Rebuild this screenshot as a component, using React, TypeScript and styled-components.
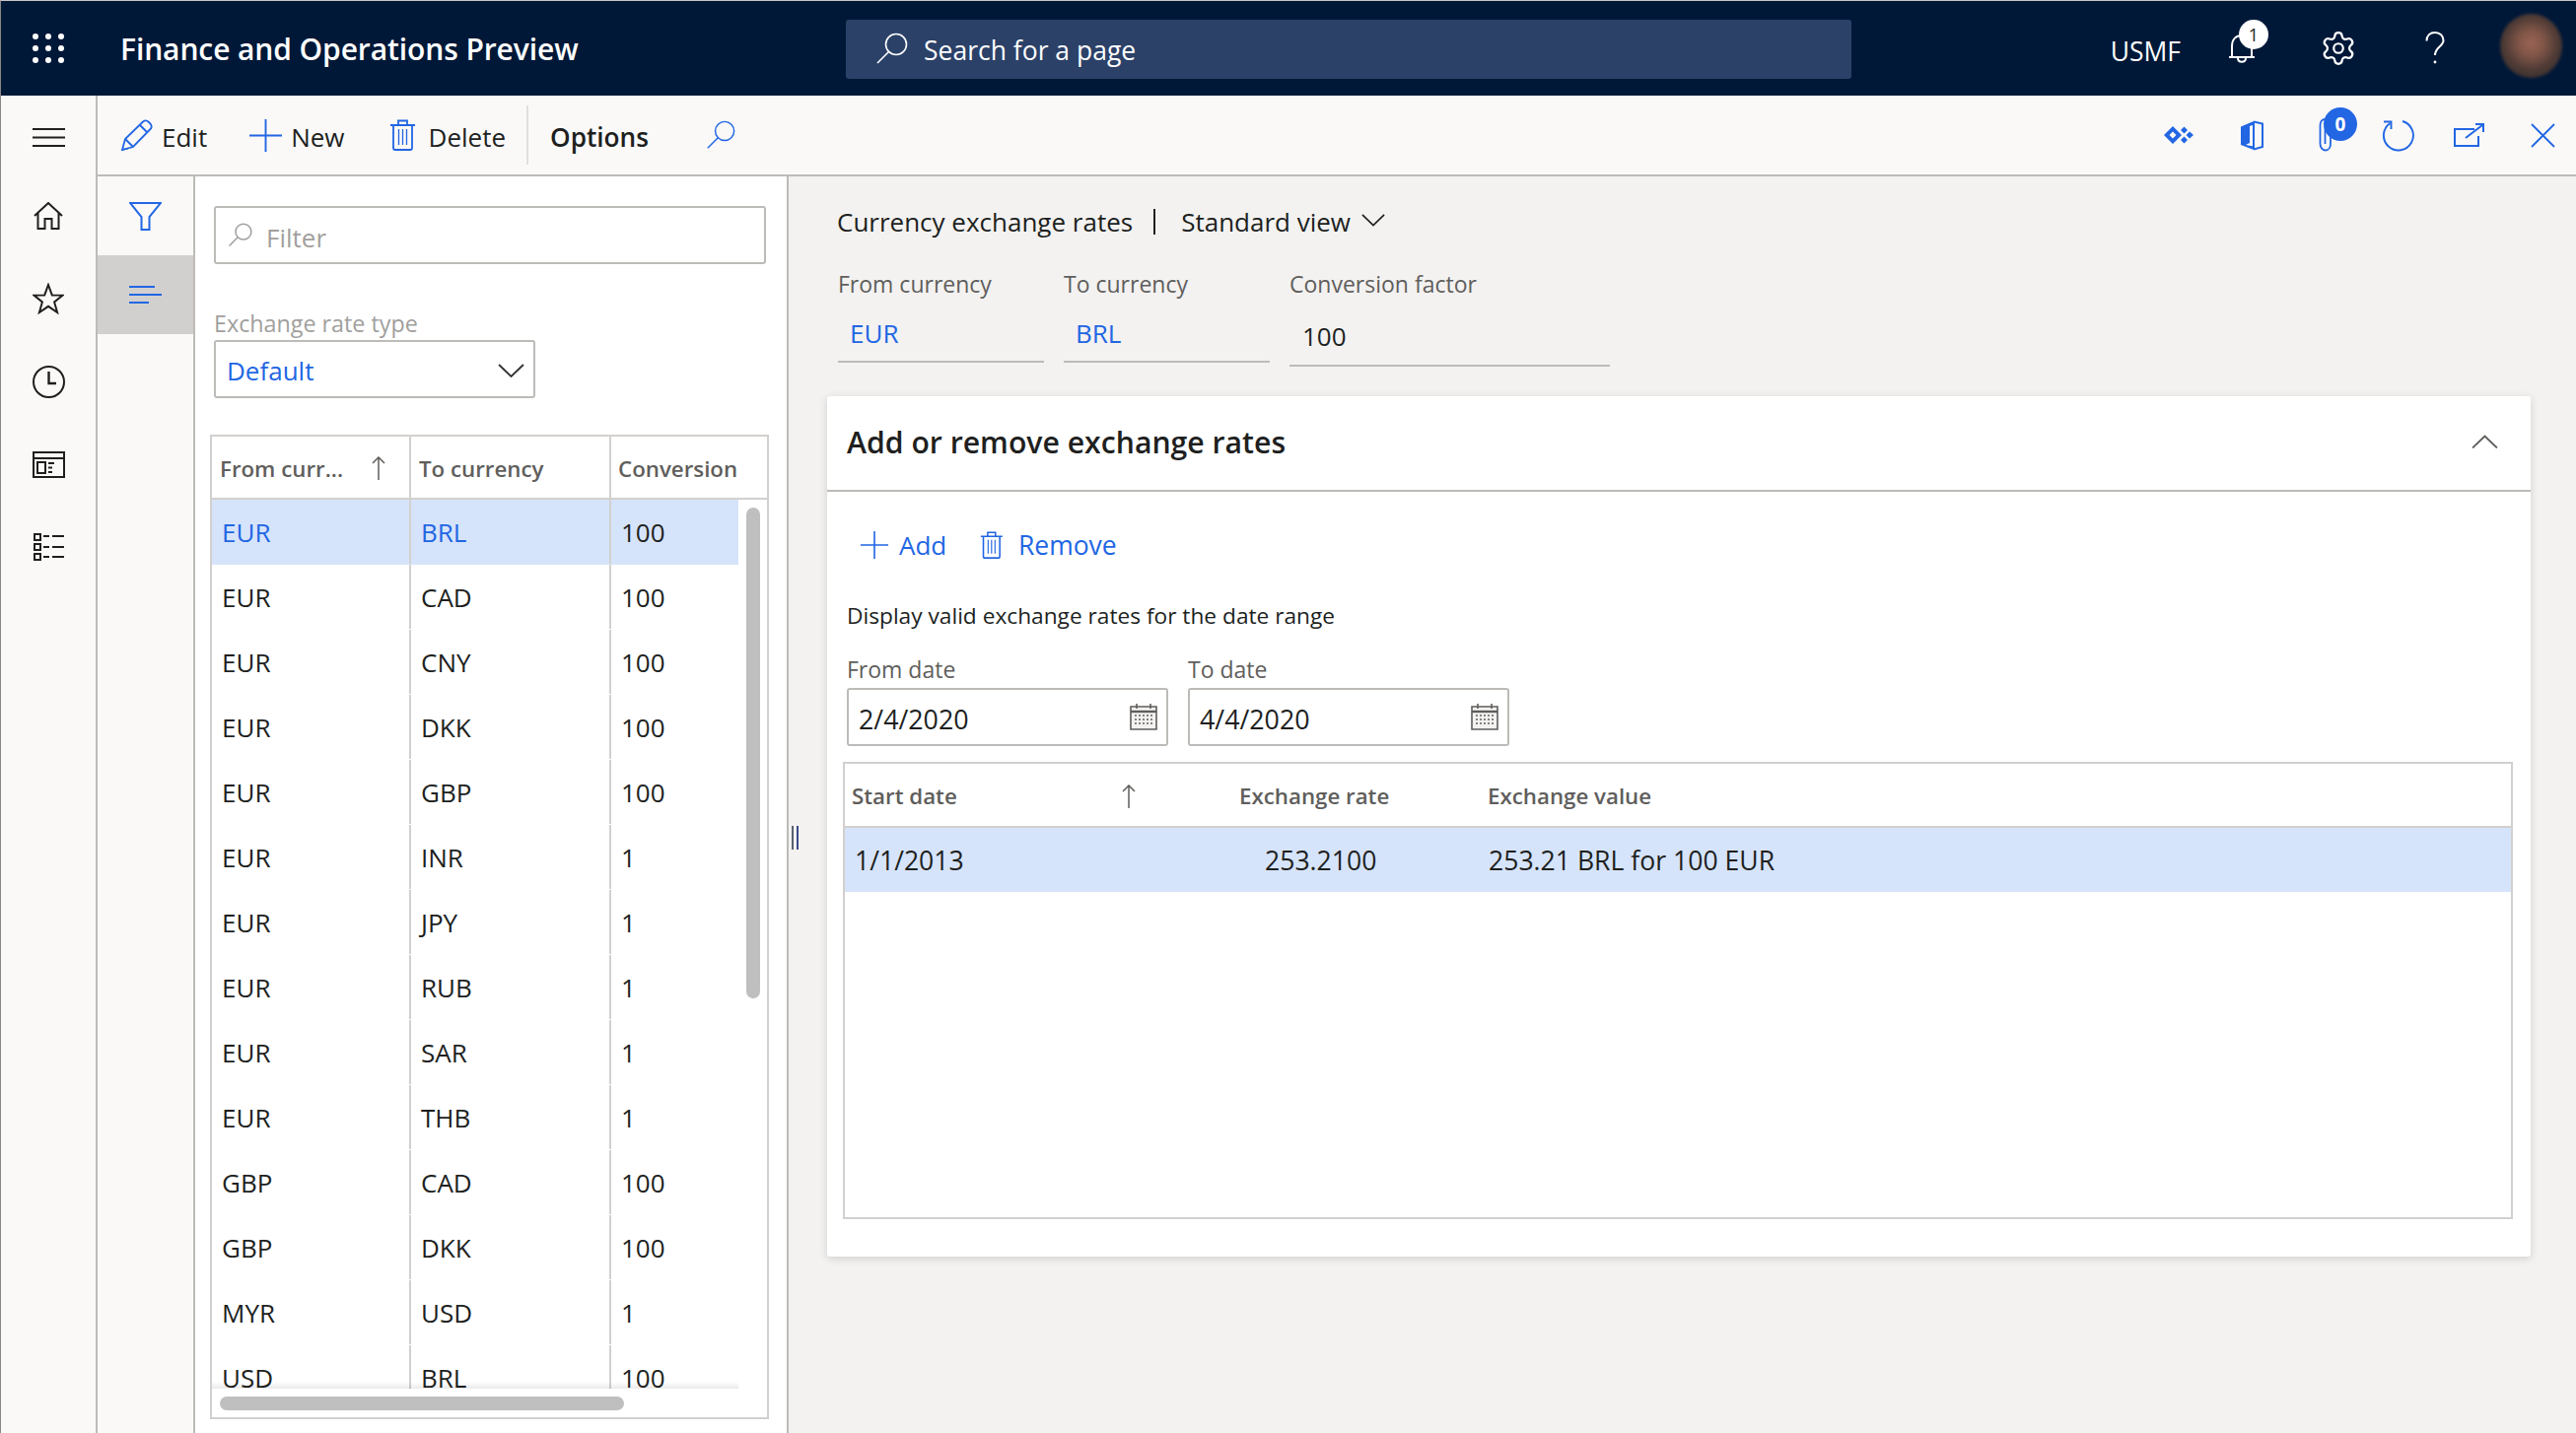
import React from 'react';
import styled, { createGlobalStyle } from 'styled-components';
import { Settings } from 'lucide-react';

const BLUE = '#2266e3';
const INK = '#201f1e';
const LINE = '#bdbbb8';
const GRID_LINE = '#d2d0ce';

const GlobalStyle = createGlobalStyle`
    * {
        box-sizing: border-box;
    }
    html, body {
        margin: 0;
        padding: 0;
        height: 100%;
        overflow: hidden;
        background: #ffffff;
    }
    body {
        font-family: 'Open Sans', 'Noto Sans', sans-serif;
        font-size: 26px;
        color: ${INK};
    }
    svg {
        display: block;
        flex: none;
    }
`;

const Page = styled.div`
    width: 2613px;
    height: 1454px;
    display: flex;
    flex-direction: column;
    border-left: 1px solid #8a8886;
    border-top: 1px solid #c8c6c4;
    overflow: hidden;
`;

const Header = styled.header`
    height: 96px;
    flex: none;
    background: #001838;
    color: #ffffff;
    display: flex;
    align-items: center;
`;

const Brand = styled.div`
    width: 857px;
    padding-left: 32px;
    display: flex;
    align-items: center;
    gap: 57px;
`;

const AppTitle = styled.div`
    font-size: 30px;
    font-weight: 600;
    letter-spacing: -0.1px;
    white-space: nowrap;
`;

const SearchBox = styled.div`
    width: 1020px;
    height: 60px;
    margin-top: 1px;
    background: #2b4168;
    border-radius: 3px;
    display: flex;
    align-items: center;
    gap: 16px;
    padding-left: 30px;
    font-size: 26.5px;
`;

const SearchText = styled.span`
    padding-top: 3px;
`;

const HeaderRight = styled.div`
    margin-left: auto;
    padding-right: 13px;
    display: flex;
    align-items: center;
`;

const Company = styled.span`
    font-size: 26.5px;
    padding-top: 5px;
    margin-right: 49px;
`;

const HeaderIcon = styled.div<{ $gap: number }>`
    position: relative;
    margin-right: ${(p) => p.$gap}px;
    display: flex;
`;

const Badge = styled.span<{ $blue?: boolean }>`
    position: absolute;
    border-radius: 50%;
    display: flex;
    align-items: center;
    justify-content: center;
    font-weight: ${(p) => (p.$blue ? 700 : 400)};
    font-size: ${(p) => (p.$blue ? 19 : 18)}px;
    color: ${(p) => (p.$blue ? '#ffffff' : INK)};
    background: ${(p) => (p.$blue ? BLUE : '#ffffff')};
    width: ${(p) => (p.$blue ? 34 : 30)}px;
    height: ${(p) => (p.$blue ? 34 : 30)}px;
    left: ${(p) => (p.$blue ? 5 : 10)}px;
    top: ${(p) => (p.$blue ? -11 : -14)}px;
`;

const Avatar = styled.div`
    width: 63px;
    height: 65px;
    margin: -5px 1px 0 1px;
    border-radius: 50%;
    background: radial-gradient(circle at 50% 46%, #9a6354 0%, #7f5547 28%, #4d3a35 58%, #27282a 100%);
    filter: blur(1.5px);
`;

const Body = styled.div`
    flex: 1;
    min-height: 0;
    display: flex;
`;

const NavRail = styled.nav`
    width: 98px;
    flex: none;
    background: #faf9f8;
    border-right: 2px solid ${LINE};
    display: flex;
    flex-direction: column;
`;

const NavButton = styled.div<{ $menu?: boolean }>`
    height: ${(p) => (p.$menu ? 80 : 84)}px;
    padding-top: ${(p) => (p.$menu ? 5 : 0)}px;
    color: ${INK};
    display: flex;
    align-items: center;
    justify-content: center;
`;

const Main = styled.div`
    flex: 1;
    min-width: 0;
    display: flex;
    flex-direction: column;
`;

const ActionBar = styled.div`
    height: 82px;
    flex: none;
    background: #faf9f8;
    border-bottom: 2px solid ${LINE};
    display: flex;
    align-items: center;
    padding-left: 23px;
`;

const ActionButton = styled.div<{ $gap: number; $iconGap?: number }>`
    display: flex;
    align-items: center;
    gap: ${(p) => p.$iconGap ?? 9}px;
    margin-right: ${(p) => p.$gap}px;
    color: ${BLUE};
`;

const ActionText = styled.span`
    color: ${INK};
    padding-top: 3px;
`;

const Divider = styled.div`
    width: 2px;
    height: 60px;
    background: #e1dfdd;
    margin-right: 22px;
`;

const OptionsLabel = styled.span`
    font-size: 26.2px;
    font-weight: 600;
    padding-top: 3px;
    margin-right: 58px;
`;

const ActionsRight = styled.div`
    margin-left: auto;
    padding-right: 21px;
    display: flex;
    align-items: center;
    color: ${BLUE};
`;

const ActionIcon = styled.div<{ $gap: number }>`
    position: relative;
    margin-right: ${(p) => p.$gap}px;
`;

const Content = styled.div`
    flex: 1;
    min-height: 0;
    display: flex;
`;

const FilterRail = styled.div`
    width: 99px;
    flex: none;
    background: #faf9f8;
    border-right: 2px solid ${LINE};
`;

const RailButton = styled.div<{ $selected?: boolean }>`
    height: 80px;
    background: ${(p) => (p.$selected ? '#d2d0ce' : 'transparent')};
    color: ${BLUE};
    display: flex;
    align-items: center;
    justify-content: center;
`;

const FilterPane = styled.aside`
    width: 602px;
    flex: none;
    background: #ffffff;
    border-right: 2px solid ${LINE};
    padding: 30px 0 0 15px;
    display: flex;
    flex-direction: column;
`;

const FilterInput = styled.div`
    width: 560px;
    height: 59px;
    margin-left: 4px;
    border: 2px solid ${LINE};
    border-radius: 3px;
    display: flex;
    align-items: center;
    gap: 14px;
    padding-left: 12px;
    color: #a19f9d;
`;

const FilterText = styled.span`
    padding-top: 4px;
`;

const PaneLabel = styled.label`
    margin: 45px 0 1px 4px;
    line-height: 30px;
    font-size: 23.3px;
    color: #a19f9d;
`;

const SelectBox = styled.div`
    width: 326px;
    height: 59px;
    margin: 1px 0 0 4px;
    border: 2px solid ${LINE};
    border-radius: 3px;
    display: flex;
    align-items: center;
    justify-content: space-between;
    padding: 3px 9px 0 11px;
    color: ${BLUE};
`;

const CurrencyGrid = styled.div`
    position: relative;
    width: 567px;
    height: 999px;
    margin-top: 37px;
    border: 2px solid ${GRID_LINE};
    overflow: hidden;
`;

const CurrencyHeader = styled.div`
    height: 64px;
    display: grid;
    grid-template-columns: 202px 203px 1fr;
    border-bottom: 2px solid ${GRID_LINE};
`;

const HeadCell = styled.div<{ $last?: boolean; $pad: number }>`
    display: flex;
    align-items: center;
    justify-content: space-between;
    padding: 2px 24px 0 ${(p) => p.$pad}px;
    border-right: ${(p) => (p.$last ? 'none' : `2px solid ${GRID_LINE}`)};
    font-size: 22.3px;
    font-weight: 600;
    color: #605e5c;
    white-space: nowrap;
`;

const RowViewport = styled.div`
    position: relative;
    width: 534px;
    height: 902px;
    overflow: hidden;
    &::after {
        content: '';
        position: absolute;
        left: 0;
        right: 0;
        bottom: 0;
        height: 7px;
        background: linear-gradient(rgba(0, 0, 0, 0), rgba(0, 0, 0, 0.08));
    }
`;

const CurrencyRow = styled.div<{ $selected?: boolean }>`
    height: 66px;
    padding-bottom: 1px;
    display: grid;
    grid-template-columns: 202px 203px 1fr;
    background: ${(p) => (p.$selected ? '#d6e4fb' : 'transparent')};
`;

const RowCell = styled.div<{ $link?: boolean; $last?: boolean }>`
    display: flex;
    align-items: center;
    padding-left: 10px;
    color: ${(p) => (p.$link ? BLUE : INK)};
    border-right: ${(p) => (p.$last ? 'none' : `2px solid ${GRID_LINE}`)};
`;

const VScroll = styled.div`
    position: absolute;
    left: 542px;
    top: 72px;
    width: 14px;
    height: 498px;
    background: #bfbfbf;
    border-radius: 7px;
`;

const HScroll = styled.div`
    position: absolute;
    left: 8px;
    bottom: 7px;
    width: 410px;
    height: 14px;
    background: #bfbfbf;
    border-radius: 7px;
`;

const Details = styled.main`
    position: relative;
    flex: 1;
    min-width: 0;
    background: #f3f2f1;
    padding: 29px 0 0 39px;
`;

const Splitter = styled.div`
    position: absolute;
    left: 3px;
    top: 659px;
    width: 7px;
    height: 24px;
    border-left: 2px solid #5a6270;
    border-right: 2px solid #3a4a8a;
`;

const Caption = styled.div`
    height: 34px;
    margin-left: 10px;
    display: flex;
    align-items: center;
`;

const CaptionSep = styled.span`
    width: 2px;
    height: 26px;
    margin: 0 26px 0 21px;
    background: ${INK};
`;

const CaptionChevron = styled.span`
    margin: -4px 0 0 11px;
    color: ${INK};
`;

const FieldRow = styled.div`
    margin: 31px 0 0 11px;
    display: flex;
    align-items: flex-start;
    gap: 20px;
`;

const Field = styled.div<{ $wide?: boolean }>`
    width: ${(p) => (p.$wide ? 325 : 209)}px;
`;

const FieldLabel = styled.label`
    display: block;
    line-height: 30px;
    font-size: 23px;
    color: #605e5c;
    white-space: nowrap;
`;

const FieldValue = styled.div<{ $plain?: boolean }>`
    height: ${(p) => (p.$plain ? 69 : 65)}px;
    padding: ${(p) => (p.$plain ? '8px 0 0 13px' : '7px 0 0 12px')};
    display: flex;
    align-items: center;
    color: ${(p) => (p.$plain ? INK : BLUE)};
    border-bottom: 2px solid ${LINE};
`;

const Card = styled.section`
    width: 1728px;
    height: 873px;
    margin-top: 30px;
    background: #ffffff;
    border-radius: 3px;
    box-shadow: 0 2px 8px rgba(0, 0, 0, 0.14);
`;

const CardHeader = styled.div`
    height: 97px;
    padding: 0 33px 3px 20px;
    border-bottom: 2px solid ${LINE};
    display: flex;
    align-items: center;
    justify-content: space-between;
    color: #605e5c;
`;

const CardTitle = styled.h2`
    margin: 0;
    font-size: 30.2px;
    font-weight: 600;
    color: ${INK};
`;

const CardActions = styled.div`
    height: 48px;
    margin: 30px 0 0 34px;
    display: flex;
    align-items: center;
`;

const CardAction = styled.div<{ $gap: number; $iconGap: number }>`
    display: flex;
    align-items: center;
    gap: ${(p) => p.$iconGap}px;
    margin-right: ${(p) => p.$gap}px;
    color: ${BLUE};
`;

const RemoveText = styled.span`
    font-size: 26.5px;
`;

const Hint = styled.p`
    margin: 31px 0 0 20px;
    line-height: 34px;
    font-size: 22.7px;
`;

const DateRow = styled.div`
    margin: 22px 0 0 20px;
    display: flex;
    gap: 20px;
`;

const DateField = styled.div`
    width: 326px;
`;

const DateInput = styled.div`
    height: 59px;
    margin-top: 4px;
    border: 2px solid ${LINE};
    border-radius: 3px;
    padding: 0 9px 0 10px;
    display: flex;
    align-items: center;
    justify-content: space-between;
    color: #605e5c;
`;

const DateText = styled.span`
    color: ${INK};
    font-size: 26.8px;
    padding-top: 3px;
`;

const RatesGrid = styled.div`
    width: 1694px;
    height: 464px;
    margin: 16px 0 0 16px;
    border: 2px solid ${GRID_LINE};
`;

const RatesRow = styled.div<{ $head?: boolean }>`
    height: 65px;
    display: grid;
    grid-template-columns: 400px 252px 1fr;
    align-items: center;
    background: ${(p) => (p.$head ? 'transparent' : '#d6e4fb')};
    border-bottom: ${(p) => (p.$head ? `2px solid ${GRID_LINE}` : 'none')};
`;

const RatesHead = styled.div<{ $pad?: number; $arrowEnd?: number }>`
    display: flex;
    align-items: center;
    justify-content: space-between;
    padding: 2px ${(p) => p.$arrowEnd ?? 0}px 0 ${(p) => p.$pad ?? 0}px;
    font-size: 22.3px;
    font-weight: 600;
    color: #605e5c;
    white-space: nowrap;
`;

const RatesCell = styled.div<{ $pad: number }>`
    padding-left: ${(p) => p.$pad}px;
    font-size: 26.6px;
`;

const Waffle = () => (
    <svg width="32" height="30" viewBox="0 0 32 30" fill="#ffffff">
        {[3, 15, 27].flatMap((y) => [3, 16, 29].map((x) => <circle key={`${x}-${y}`} cx={x} cy={y} r="3" />))}
    </svg>
);

const Magnifier = ({ size = 33, width = 1.6 }: { size?: number; width?: number }) => (
    <svg width={size} height={size} viewBox="0 0 33 33" fill="none" stroke="currentColor" strokeWidth={width}>
        <circle cx="21" cy="12" r="10.5" />
        <path d="M13.5 19.5 L2 31" />
    </svg>
);

const Bell = () => (
    <svg width="26" height="30" viewBox="0 0 26 30" fill="none" stroke="#ffffff" strokeWidth="2">
        <path d="M0 24 H26 M3 24 V13 C3 6 7 2 13 2 C19 2 23 6 23 13 V24" />
        <path d="M9 25 C9 30 17 30 17 25" />
    </svg>
);

const Question = () => (
    <svg width="20" height="34" viewBox="0 0 20 34" fill="none" stroke="#ffffff" strokeWidth="2">
        <path d="M1.5 9.5 C1.5 4 5 1 10 1 C15 1 18.5 4.5 18.5 9 C18.5 15 10 16 10 24" />
        <circle cx="10" cy="31" r="1.4" fill="#ffffff" stroke="none" />
    </svg>
);

const Hamburger = () => (
    <svg width="33" height="19" viewBox="0 0 33 19" stroke="currentColor" strokeWidth="2">
        <path d="M0 1 H33 M0 9.5 H33 M0 18 H33" />
    </svg>
);

const Home = () => (
    <svg width="30" height="28" viewBox="0 0 30 28" fill="none" stroke="currentColor" strokeWidth="2">
        <path d="M1 14 L15 1 L29 14 M4.5 11 V27 H11.5 V17 H18.5 V27 H25.5 V11" />
    </svg>
);

const Star = () => (
    <svg width="32" height="32" viewBox="0 0 32 32" fill="none" stroke="currentColor" strokeWidth="2">
        <path d="M16 2 L19.8 12.4 L30.6 12.6 L22.1 19.4 L25.1 30 L16 23.8 L6.9 30 L9.9 19.4 L1.4 12.6 L12.2 12.4 Z" />
    </svg>
);

const Clock = () => (
    <svg width="33" height="33" viewBox="0 0 33 33" fill="none" stroke="currentColor" strokeWidth="2">
        <circle cx="16.5" cy="16.5" r="15.5" />
        <path d="M16.5 6 V18 H24" strokeWidth="2.4" />
    </svg>
);

const Tiles = () => (
    <svg width="33" height="27" viewBox="0 0 33 27" fill="none" stroke="currentColor" strokeWidth="2">
        <path d="M1 1 H32 V26 H1 Z M1 7 H32" />
        <path d="M5 11 H13 V22 H5 Z" />
        <path d="M16 12 H22 M16 16.5 H20 M16 21 H20" />
    </svg>
);

const ListIcon = () => (
    <svg width="31" height="28" viewBox="0 0 31 28" fill="none" stroke="currentColor" strokeWidth="2">
        <path d="M1 1 H7 V7 H1 Z M1 11 H7 V17 H1 Z M1 21 H7 V27 H1 Z" />
        <path d="M10 3 H16 M19 3 H31 M10 14 H16 M19 14 H31 M10 24 H16 M19 24 H31" />
    </svg>
);

const Funnel = () => (
    <svg width="33" height="29" viewBox="0 0 33 29" fill="none" stroke="currentColor" strokeWidth="2">
        <path d="M1 1 H32 L20.5 15 V28 H12.5 V15 Z" />
    </svg>
);

const Lines = () => (
    <svg width="33" height="18" viewBox="0 0 33 18" stroke="currentColor" strokeWidth="2">
        <path d="M0 1 H26 M0 9 H33 M0 17 H20" />
    </svg>
);

const Pencil = () => (
    <svg width="33" height="33" viewBox="0 0 33 33" fill="none" stroke="currentColor" strokeWidth="1.8">
        <path d="M2 31 L5 20 L23 2.5 C25 1 27 1 29 3 L30.5 4.5 C32 6.5 32 8.5 30.5 10 L13 28 Z" />
        <path d="M5 20 L13 28 M20 6 L27.5 13.5 M2 31 L8 29.5" />
    </svg>
);

const Plus = ({ size = 33 }: { size?: number }) => (
    <svg width={size} height={size} viewBox="0 0 33 33" stroke="currentColor" strokeWidth="1.9">
        <path d="M16.5 0 V33 M0 16.5 H33" />
    </svg>
);

const Trash = ({ height = 32 }: { height?: number }) => (
    <svg width={(height * 27) / 32} height={height} viewBox="0 0 27 32" fill="none" stroke="currentColor" strokeWidth="1.8">
        <path d="M1 6 H26 M9 6 V1.5 H18 V6 M4 6 V29 Q4 31 6 31 H21 Q23 31 23 29 V6" />
        <path d="M9.5 10 V26 M13.5 10 V26 M17.5 10 V26" strokeWidth="1.3" />
    </svg>
);

const Diamonds = () => (
    <svg width="30" height="18" viewBox="0 0 30 18" fill="currentColor">
        <path fillRule="evenodd" d="M9 0 L18 9 L9 18 L0 9 Z M9 5.5 L5.5 9 L9 12.5 L12.5 9 Z" />
        <path d="M20.5 0.5 L24 4 L20.5 7.5 L17 4 Z M20.5 10.5 L24 14 L20.5 17.5 L17 14 Z M26 5.5 L30 9 L26 12.5 L22.5 9 Z" />
    </svg>
);

const OfficeIcon = () => (
    <svg width="24" height="31" viewBox="0 0 24 31" fill="none" stroke="currentColor" strokeWidth="2">
        <path d="M14 1.5 L23 3.5 V27 L14 29.5" />
        <path d="M14 1 L1 6.5 V25 L14 30 V26.5 L6 25 L10 23 V6 L14 4.5 Z" fill="currentColor" stroke="none" />
        <path d="M14 2 V29" />
    </svg>
);

const Clip = () => (
    <svg width="15" height="34" viewBox="0 0 15 34" fill="none" stroke="currentColor" strokeWidth="1.8">
        <path d="M12 8 V26 C12 29.5 10 32.5 7 32.5 C4 32.5 1.5 29.5 1.5 26 V7 C1.5 3.5 3.5 1 6.5 1 C9.5 1 11 3.5 11 7" />
        <path d="M6.5 8 V26" />
    </svg>
);

const Refresh = () => (
    <svg width="33" height="33" viewBox="0 0 33 33" fill="none" stroke="currentColor" strokeWidth="1.9">
        <path d="M8.5 4 A15 15 0 1 0 21 2" />
        <path d="M2 2.5 H9.5 V10" />
    </svg>
);

const Popout = () => (
    <svg width="31" height="24" viewBox="0 0 31 24" fill="none" stroke="currentColor" strokeWidth="2">
        <path d="M21 6 H1 V23 H25 V13" />
        <path d="M12 15 L29 2 M22 1 H30 V9" />
    </svg>
);

const CloseX = () => (
    <svg width="25" height="25" viewBox="0 0 25 25" stroke="currentColor" strokeWidth="1.8">
        <path d="M1 1 L24 24 M24 1 L1 24" />
    </svg>
);

const Chevron = ({ width = 27, up = false, color = 'currentColor' }: { width?: number; up?: boolean; color?: string }) => (
    <svg width={width} height={width / 2 + 1} viewBox="0 0 26 14" fill="none" stroke={color} strokeWidth="1.8">
        <path d={up ? 'M1 13 L13 1.5 L25 13' : 'M1 1 L13 12.5 L25 1'} />
    </svg>
);

const SortArrow = () => (
    <svg width="14" height="24" viewBox="0 0 14 24" fill="none" stroke="currentColor" strokeWidth="1.5">
        <path d="M7 24 V1 M1 7 L7 1 L13 7" />
    </svg>
);

const Calendar = () => (
    <svg width="28" height="27" viewBox="0 0 28 27" fill="#f3f2f1" stroke="currentColor" strokeWidth="1.6">
        <path d="M1 3 H27 V26 H1 Z" />
        <path d="M1 8 H27" strokeWidth="2.4" />
        <path d="M7 0 V5 M21 0 V5" />
        <path d="M5 12 H23 M5 16 H23 M5 20 H23" strokeDasharray="2 2" strokeWidth="1.4" />
    </svg>
);

const currencyRows = [
    ['EUR', 'BRL', '100'],
    ['EUR', 'CAD', '100'],
    ['EUR', 'CNY', '100'],
    ['EUR', 'DKK', '100'],
    ['EUR', 'GBP', '100'],
    ['EUR', 'INR', '1'],
    ['EUR', 'JPY', '1'],
    ['EUR', 'RUB', '1'],
    ['EUR', 'SAR', '1'],
    ['EUR', 'THB', '1'],
    ['GBP', 'CAD', '100'],
    ['GBP', 'DKK', '100'],
    ['MYR', 'USD', '1'],
    ['USD', 'BRL', '100'],
];

const App: React.FC = () => {
    return (
        <Page>
            <GlobalStyle />
            <Header>
                <Brand>
                    <Waffle />
                    <AppTitle>Finance and Operations Preview</AppTitle>
                </Brand>
                <SearchBox>
                    <Magnifier />
                    <SearchText>Search for a page</SearchText>
                </SearchBox>
                <HeaderRight>
                    <Company>USMF</Company>
                    <HeaderIcon $gap={66}>
                        <Bell />
                        <Badge>1</Badge>
                    </HeaderIcon>
                    <HeaderIcon $gap={69}>
                        <Settings size={38} strokeWidth={1.4} />
                    </HeaderIcon>
                    <HeaderIcon $gap={55}>
                        <Question />
                    </HeaderIcon>
                    <Avatar />
                </HeaderRight>
            </Header>
            <Body>
                <NavRail>
                    <NavButton $menu>
                        <Hamburger />
                    </NavButton>
                    <NavButton>
                        <Home />
                    </NavButton>
                    <NavButton>
                        <Star />
                    </NavButton>
                    <NavButton>
                        <Clock />
                    </NavButton>
                    <NavButton>
                        <Tiles />
                    </NavButton>
                    <NavButton>
                        <ListIcon />
                    </NavButton>
                </NavRail>
                <Main>
                    <ActionBar>
                        <ActionButton $gap={43}>
                            <Pencil />
                            <ActionText>Edit</ActionText>
                        </ActionButton>
                        <ActionButton $gap={45}>
                            <Plus />
                            <ActionText>New</ActionText>
                        </ActionButton>
                        <ActionButton $gap={21} $iconGap={13}>
                            <Trash />
                            <ActionText>Delete</ActionText>
                        </ActionButton>
                        <Divider />
                        <OptionsLabel>Options</OptionsLabel>
                        <ActionButton $gap={0}>
                            <Magnifier size={30} />
                        </ActionButton>
                        <ActionsRight>
                            <ActionIcon $gap={47}>
                                <Diamonds />
                            </ActionIcon>
                            <ActionIcon $gap={56}>
                                <OfficeIcon />
                            </ActionIcon>
                            <ActionIcon $gap={49}>
                                <Clip />
                                <Badge $blue>0</Badge>
                            </ActionIcon>
                            <ActionIcon $gap={40}>
                                <Refresh />
                            </ActionIcon>
                            <ActionIcon $gap={47}>
                                <Popout />
                            </ActionIcon>
                            <CloseX />
                        </ActionsRight>
                    </ActionBar>
                    <Content>
                        <FilterRail>
                            <RailButton>
                                <Funnel />
                            </RailButton>
                            <RailButton $selected>
                                <Lines />
                            </RailButton>
                        </FilterRail>
                        <FilterPane>
                            <FilterInput>
                                <Magnifier size={25} width={2} />
                                <FilterText>Filter</FilterText>
                            </FilterInput>
                            <PaneLabel>Exchange rate type</PaneLabel>
                            <SelectBox>
                                Default
                                <Chevron color="#323130" />
                            </SelectBox>
                            <CurrencyGrid>
                                <CurrencyHeader>
                                    <HeadCell $pad={8}>
                                        From curr...
                                        <SortArrow />
                                    </HeadCell>
                                    <HeadCell $pad={8}>To currency</HeadCell>
                                    <HeadCell $pad={7} $last>
                                        Conversion
                                    </HeadCell>
                                </CurrencyHeader>
                                <RowViewport>
                                    {currencyRows.map(([from, to, factor], i) => (
                                        <CurrencyRow key={from + to} $selected={i === 0}>
                                            <RowCell $link={i === 0}>{from}</RowCell>
                                            <RowCell $link={i === 0}>{to}</RowCell>
                                            <RowCell $last>{factor}</RowCell>
                                        </CurrencyRow>
                                    ))}
                                </RowViewport>
                                <VScroll />
                                <HScroll />
                            </CurrencyGrid>
                        </FilterPane>
                        <Details>
                            <Splitter />
                            <Caption>
                                Currency exchange rates
                                <CaptionSep />
                                Standard view
                                <CaptionChevron>
                                    <Chevron width={24} />
                                </CaptionChevron>
                            </Caption>
                            <FieldRow>
                                <Field>
                                    <FieldLabel>From currency</FieldLabel>
                                    <FieldValue>EUR</FieldValue>
                                </Field>
                                <Field>
                                    <FieldLabel>To currency</FieldLabel>
                                    <FieldValue>BRL</FieldValue>
                                </Field>
                                <Field $wide>
                                    <FieldLabel>Conversion factor</FieldLabel>
                                    <FieldValue $plain>100</FieldValue>
                                </Field>
                            </FieldRow>
                            <Card>
                                <CardHeader>
                                    <CardTitle>Add or remove exchange rates</CardTitle>
                                    <Chevron up />
                                </CardHeader>
                                <CardActions>
                                    <CardAction $gap={34} $iconGap={11}>
                                        <Plus size={28} />
                                        Add
                                    </CardAction>
                                    <CardAction $gap={0} $iconGap={15}>
                                        <Trash height={28} />
                                        <RemoveText>Remove</RemoveText>
                                    </CardAction>
                                </CardActions>
                                <Hint>Display valid exchange rates for the date range</Hint>
                                <DateRow>
                                    <DateField>
                                        <FieldLabel>From date</FieldLabel>
                                        <DateInput>
                                            <DateText>2/4/2020</DateText>
                                            <Calendar />
                                        </DateInput>
                                    </DateField>
                                    <DateField>
                                        <FieldLabel>To date</FieldLabel>
                                        <DateInput>
                                            <DateText>4/4/2020</DateText>
                                            <Calendar />
                                        </DateInput>
                                    </DateField>
                                </DateRow>
                                <RatesGrid>
                                    <RatesRow $head>
                                        <RatesHead $pad={7} $arrowEnd={105}>
                                            Start date
                                            <SortArrow />
                                        </RatesHead>
                                        <RatesHead>Exchange rate</RatesHead>
                                        <RatesHead>Exchange value</RatesHead>
                                    </RatesRow>
                                    <RatesRow>
                                        <RatesCell $pad={10}>1/1/2013</RatesCell>
                                        <RatesCell $pad={26}>253.2100</RatesCell>
                                        <RatesCell $pad={1}>253.21 BRL for 100 EUR</RatesCell>
                                    </RatesRow>
                                </RatesGrid>
                            </Card>
                        </Details>
                    </Content>
                </Main>
            </Body>
        </Page>
    );
};

export default App;
